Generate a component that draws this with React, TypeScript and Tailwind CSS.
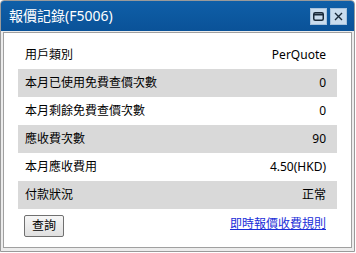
import React from "react";

const rows: [string, string][] = [
  ["用戶類別", "PerQuote"],
  ["本月已使用免費查價次數", "0"],
  ["本月剩餘免費查價次數", "0"],
  ["應收費次數", "90"],
  ["本月應收費用", "4.50(HKD)"],
  ["付款狀況", "正常"],
];

export default function App() {
  return (
    <div
      className="w-[356px] h-[253px] bg-white"
      style={{ fontFamily: '"Noto Sans", "Noto Sans CJK TC", sans-serif' }}
    >
      <div className="w-[355px] h-[252px] flex flex-col rounded-t-[4px] border border-[#9a9a9a] bg-[#ececec] overflow-hidden">
        <div className="h-[30px] shrink-0 flex items-center justify-between pl-[8px] pr-[7px] bg-gradient-to-b from-[#0f5fa8] to-[#0a5298]">
          <span className="text-white text-[14px] leading-none">報價記錄(F5006)</span>
          <div className="flex gap-[3px]">
            <div className="w-[17px] h-[17px] bg-[#c9dcee] border border-[#a8c2dc] flex items-center justify-center">
              <svg width="11" height="9" viewBox="0 0 11 9">
                <rect x="0.75" y="0.75" width="9.5" height="7.5" rx="1.5" fill="none" stroke="#1a2a3a" strokeWidth="1.5" />
                <line x1="1" y1="2.6" x2="10" y2="2.6" stroke="#1a2a3a" strokeWidth="1.6" />
              </svg>
            </div>
            <div className="w-[17px] h-[17px] bg-[#c9dcee] border border-[#a8c2dc] flex items-center justify-center">
              <svg width="9" height="9" viewBox="0 0 9 9">
                <path d="M1 1 L8 8 M8 1 L1 8" stroke="#1a2a3a" strokeWidth="1.4" />
              </svg>
            </div>
          </div>
        </div>
        <div className="flex-1 px-[2px] pb-[3px] pt-px flex">
          <div className="flex-1 bg-white border border-[#a0a0a0] flex flex-col pt-[8px] px-[14px]">
            {rows.map(([k, v], i) => (
              <div
                key={k}
                className={`h-[28px] flex items-center justify-between pl-[7px] pr-[11px] text-[12px] text-black ${
                  i % 2 === 1 ? "bg-[#d9d9d9]" : ""
                }`}
              >
                <span>{k}</span>
                <span>{v}</span>
              </div>
            ))}
            <div className="mt-[6px] flex items-center justify-between pl-[6px] pr-[11px]">
              <button className="w-[40px] h-[22px] text-[12px] text-black border border-[#707070] rounded-[2px] bg-gradient-to-b from-[#f6f6f6] to-[#e0e0e0]">
                查詢
              </button>
              <a className="text-[12px] text-[#1a2ed8] underline mb-[4px]" href="#">
                即時報價收費規則
              </a>
            </div>
          </div>
        </div>
      </div>
    </div>
  );
}
